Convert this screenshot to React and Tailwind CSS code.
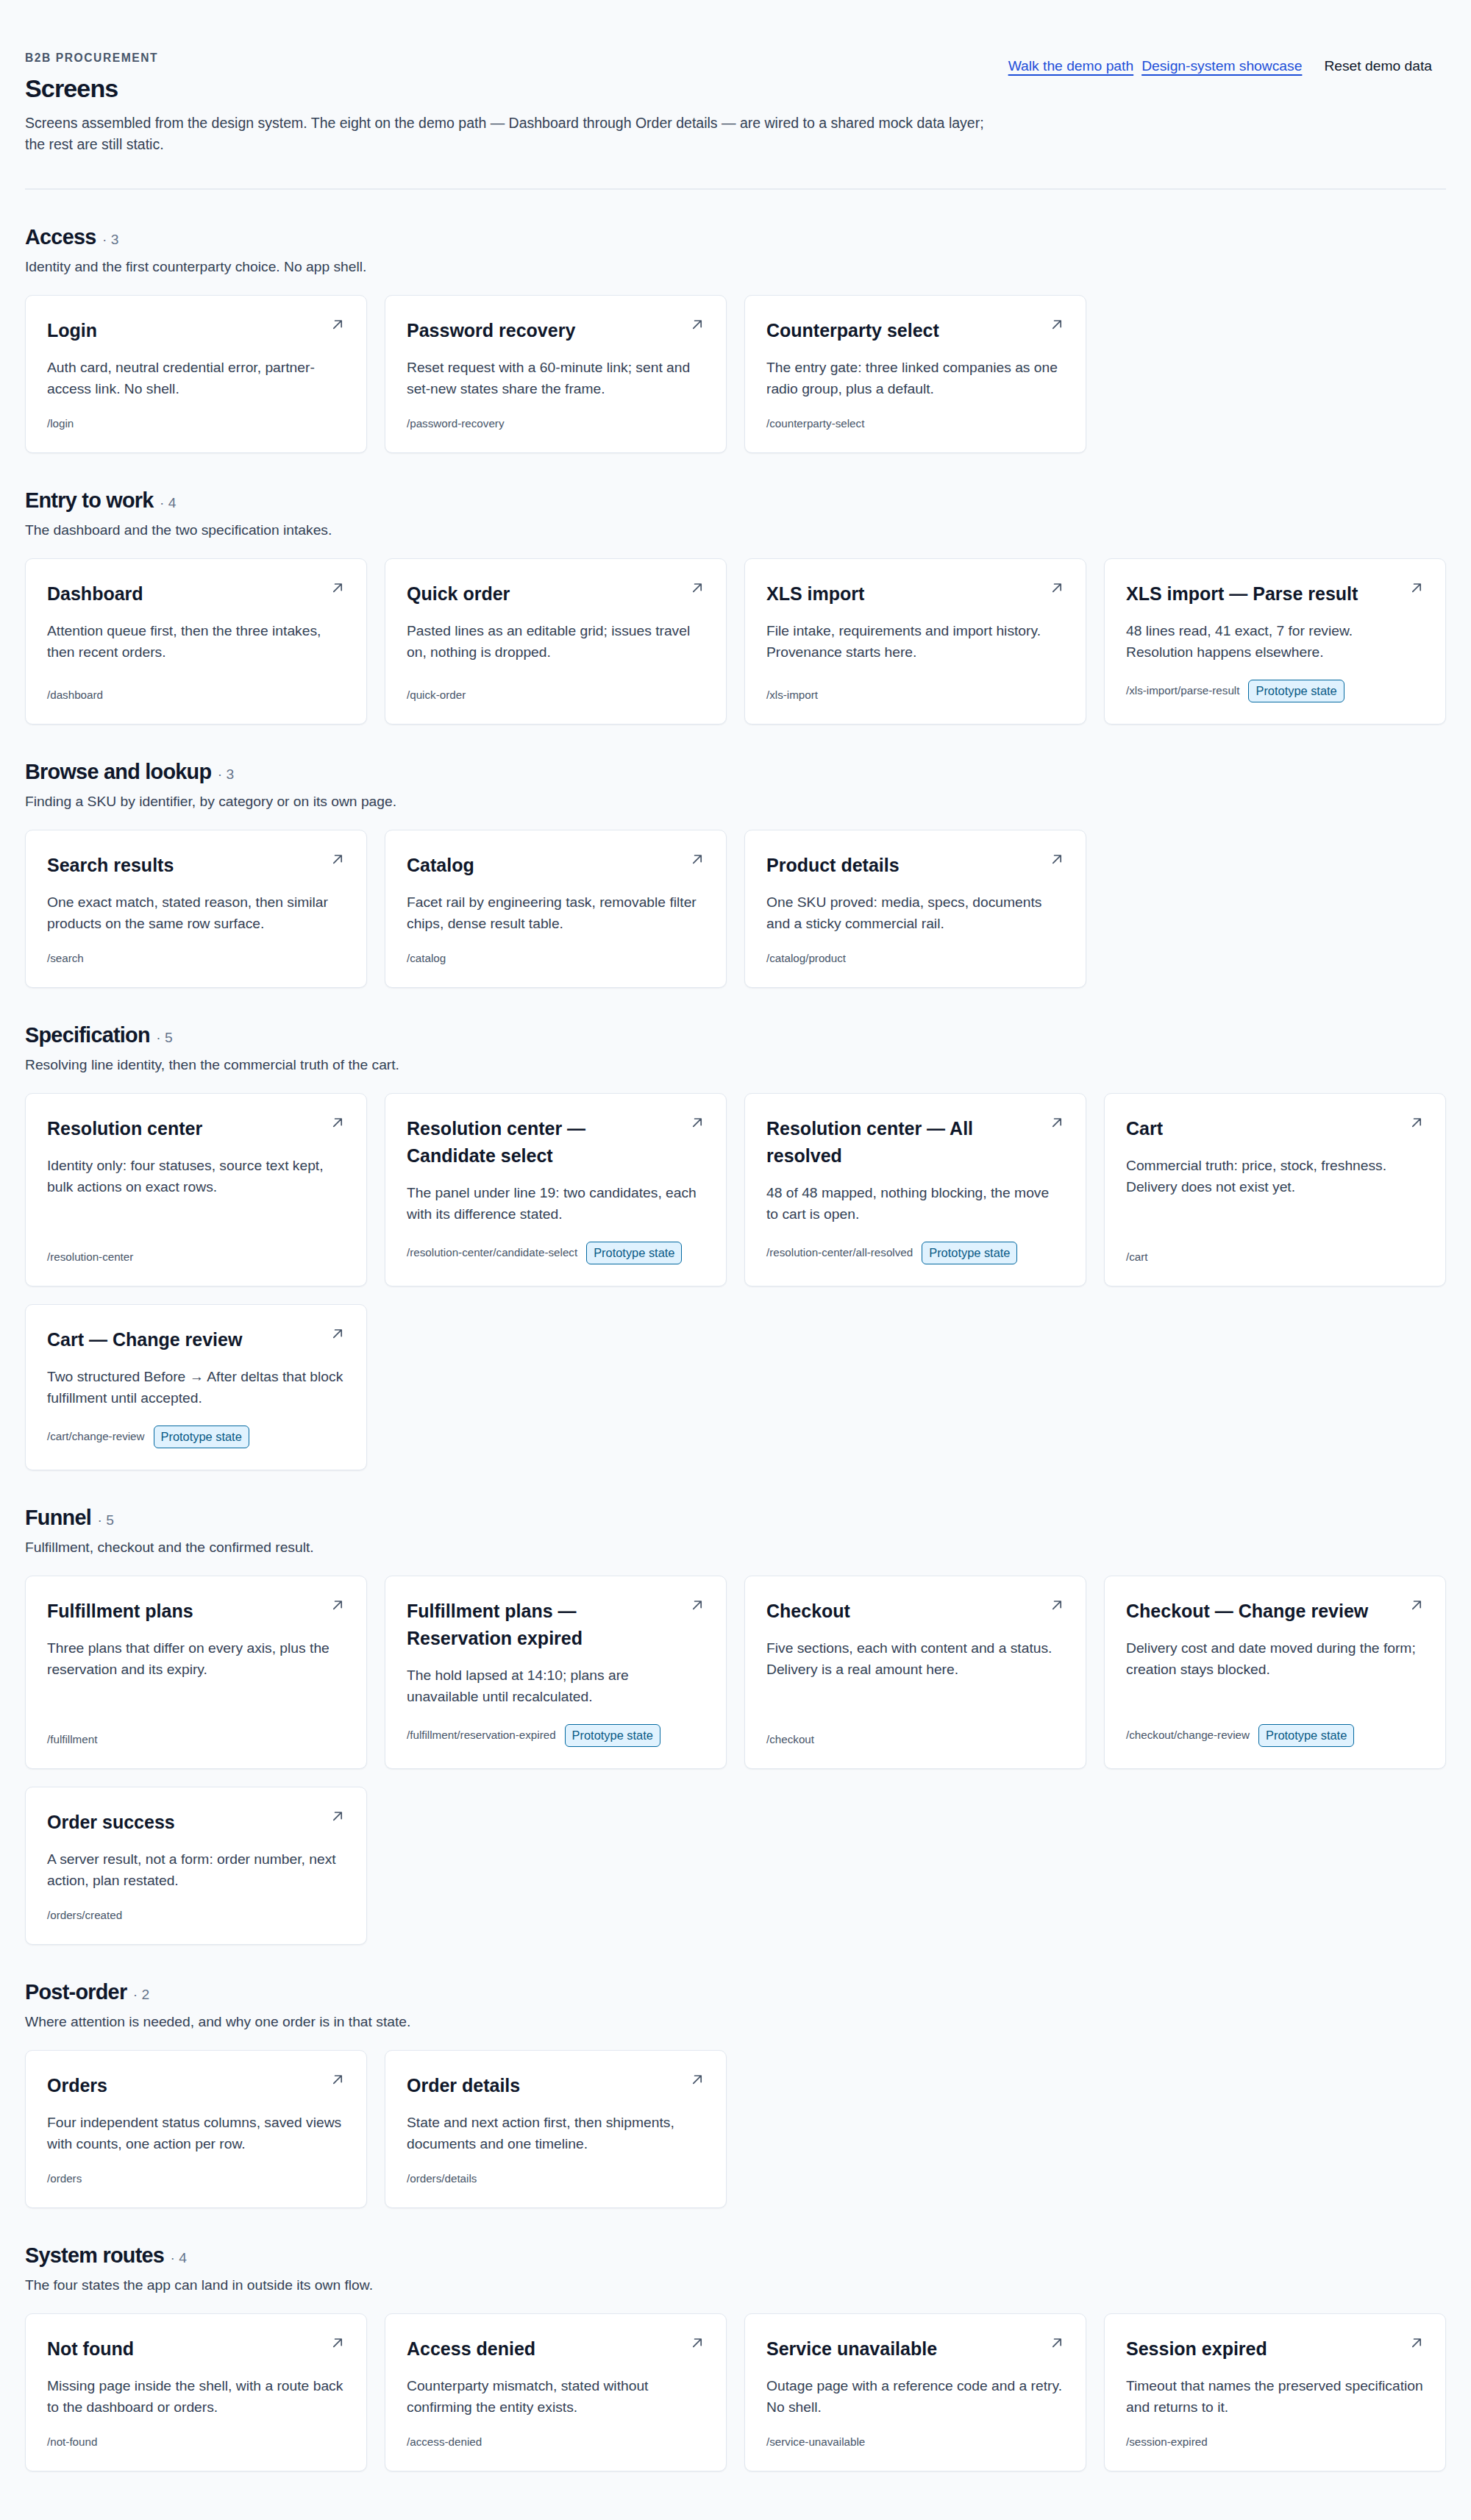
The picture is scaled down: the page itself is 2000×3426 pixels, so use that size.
const sections = [
  {
    title: "Access",
    note: "Identity and the first counterparty choice. No app shell.",
    items: [
      { name: "Login", desc: "Auth card, neutral credential error, partner-access link. No shell.", path: "/login" },
      { name: "Password recovery", desc: "Reset request with a 60-minute link; sent and set-new states share the frame.", path: "/password-recovery" },
      { name: "Counterparty select", desc: "The entry gate: three linked companies as one radio group, plus a default.", path: "/counterparty-select" },
    ],
  },
  {
    title: "Entry to work",
    note: "The dashboard and the two specification intakes.",
    items: [
      { name: "Dashboard", desc: "Attention queue first, then the three intakes, then recent orders.", path: "/dashboard" },
      { name: "Quick order", desc: "Pasted lines as an editable grid; issues travel on, nothing is dropped.", path: "/quick-order" },
      { name: "XLS import", desc: "File intake, requirements and import history. Provenance starts here.", path: "/xls-import" },
      { name: "XLS import — Parse result", desc: "48 lines read, 41 exact, 7 for review. Resolution\u00a0happens elsewhere.", path: "/xls-import/parse-result", proto: true },
    ],
  },
  {
    title: "Browse and lookup",
    note: "Finding a SKU by identifier, by category or on its own page.",
    items: [
      { name: "Search results", desc: "One exact match, stated reason, then similar products on the same row surface.", path: "/search" },
      { name: "Catalog", desc: "Facet rail by engineering task, removable filter chips, dense result table.", path: "/catalog" },
      { name: "Product details", desc: "One SKU proved: media, specs, documents and a sticky commercial rail.", path: "/catalog/product" },
    ],
  },
  {
    title: "Specification",
    note: "Resolving line identity, then the commercial truth of the cart.",
    items: [
      { name: "Resolution center", desc: "Identity only: four statuses, source text kept, bulk actions on exact rows.", path: "/resolution-center" },
      { name: "Resolution center — Candidate select", desc: "The panel under line 19: two candidates, each with its difference stated.", path: "/resolution-center/candidate-select", proto: true },
      { name: "Resolution center — All resolved", desc: "48 of 48 mapped, nothing blocking, the move to cart is open.", path: "/resolution-center/all-resolved", proto: true },
      { name: "Cart", desc: "Commercial truth: price, stock, freshness. Delivery does not exist yet.", path: "/cart" },
      { name: "Cart — Change review", desc: "Two structured Before → After deltas that block fulfillment until accepted.", path: "/cart/change-review", proto: true },
    ],
  },
  {
    title: "Funnel",
    note: "Fulfillment, checkout and the confirmed result.",
    items: [
      { name: "Fulfillment plans", desc: "Three plans that differ on every axis, plus the reservation and its expiry.", path: "/fulfillment" },
      { name: "Fulfillment plans — Reservation expired", desc: "The hold lapsed at 14:10; plans are unavailable\u00a0until recalculated.", path: "/fulfillment/reservation-expired", proto: true },
      { name: "Checkout", desc: "Five sections, each with content and a status. Delivery is a real amount here.", path: "/checkout" },
      { name: "Checkout — Change review", desc: "Delivery cost and date moved during the form; creation stays blocked.", path: "/checkout/change-review", proto: true },
      { name: "Order success", desc: "A server result, not a form: order number, next action, plan restated.", path: "/orders/created" },
    ],
  },
  {
    title: "Post-order",
    note: "Where attention is needed, and why one order is in that state.",
    items: [
      { name: "Orders", desc: "Four independent status columns, saved views with counts, one action per row.", path: "/orders" },
      { name: "Order details", desc: "State and next action first, then shipments, documents and one timeline.", path: "/orders/details" },
    ],
  },
  {
    title: "System routes",
    note: "The four states the app can land in outside its own flow.",
    items: [
      { name: "Not found", desc: "Missing page inside the shell, with a route back to the dashboard or orders.", path: "/not-found" },
      { name: "Access denied", desc: "Counterparty mismatch, stated without confirming the entity exists.", path: "/access-denied" },
      { name: "Service unavailable", desc: "Outage page with a reference code and a retry. No shell.", path: "/service-unavailable" },
      { name: "Session expired", desc: "Timeout that names the preserved specification and returns to it.", path: "/session-expired" },
    ],
  },
];

const ArrowIcon = () => (
  <svg width="20" height="20" viewBox="0 0 20 20" fill="none" className="shrink-0 text-[#475569]">
    <path d="M4.8 15.4 L15 5.2 M6.6 5 H15.2 V13.6" stroke="currentColor" strokeWidth="1.7" strokeLinecap="round" strokeLinejoin="round" />
  </svg>
);

const ScreenCard = ({ item }) => {
  return (
    <a href="#" className="flex flex-col rounded-[10px] border border-[#e2e8f0] bg-white p-[29px] shadow-[0_1px_2px_rgba(15,23,42,0.06)]">
      <div className="flex items-start justify-between gap-[20px]">
        <h3 className="text-[25px] leading-[37px] font-bold text-[#0f172a]">{item.name}</h3>
        <ArrowIcon />
      </div>
      <p className="mt-[17px] text-[19.25px] leading-[29px] text-[#334155]">{item.desc}</p>
      <div className="mt-auto flex items-center gap-[12px] pt-[23px]">
        <span className="text-[15.2px] leading-[20px] text-[#475569]">{item.path}</span>
        {item.proto && (
          <span className="rounded-[6px] border-[1.5px] border-[#0369a1] bg-[#e0f2fe] px-[9px] text-[16.4px] leading-[29px] text-[#075985]">
            Prototype state
          </span>
        )}
      </div>
    </a>
  );
};

export default function App() {
  return (
    <div className="min-h-screen bg-[#f8fafc] px-[34px] pt-[67px] pb-[68px] font-['Liberation_Sans',Arial,sans-serif]">
      <header className="flex items-start justify-between border-b-2 border-[#e6ebf1] pb-[45px]">
        <div>
          <div className="text-[15.6px] leading-[24px] font-bold tracking-[0.1em] text-[#475569]">B2B PROCUREMENT</div>
          <h1 className="mt-[9px] text-[34px] leading-[41px] font-bold tracking-tight text-[#0f172a]">Screens</h1>
          <p className="mt-[12px] max-w-[1315px] text-[19.5px] leading-[28.8px] text-[#334155]">
            Screens assembled from the design system. The eight on the demo path — Dashboard through Order details — are wired to a shared mock data layer; the rest are still static.
          </p>
        </div>
        <nav className="mt-[8px] flex shrink-0 items-center gap-[11px] text-[19.25px] leading-[29px]">
          <a href="#" className="text-[#1d4ed8] underline decoration-[1.5px] underline-offset-[5px]">Walk the demo path</a>
          <a href="#" className="text-[#1d4ed8] underline decoration-[1.5px] underline-offset-[5px]">Design-system showcase</a>
          <button className="px-[19px] text-[#0f172a]">Reset demo data</button>
        </nav>
      </header>

      <main className="flex flex-col gap-[46px] pt-[46px]">
        {sections.map((s) => (
          <section key={s.title}>
            <h2 className="text-[28.8px] leading-[36px] font-bold tracking-tight text-[#0f172a]">
              {s.title}
              <span className="ml-[3px] text-[19.25px] leading-none font-normal tracking-normal text-[#64748b]"> · {s.items.length}</span>
            </h2>
            <p className="mt-[8px] text-[19.25px] leading-[29px] text-[#334155]">{s.note}</p>
            <div className="mt-[24px] grid grid-cols-4 gap-[24px]">
              {s.items.map((item) => (
                <ScreenCard key={item.path} item={item} />
              ))}
            </div>
          </section>
        ))}
      </main>
    </div>
  );
}
